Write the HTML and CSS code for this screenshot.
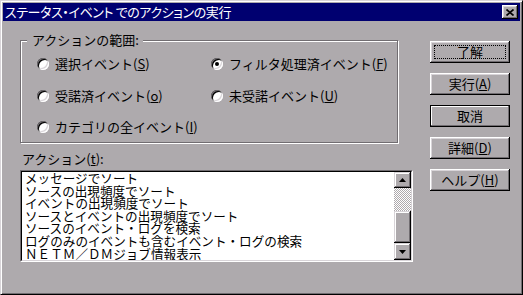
FILE: index.html
```html
<!DOCTYPE html>
<html lang="ja">
<head>
  <meta charset="utf-8">
  <title>ステータス・イベント でのアクションの実行</title>
  <link rel="stylesheet" href="styles.css">
</head>
<body>
  <div class="window">
    <div class="titlebar">
      <span class="title">ステータス・イベント でのアクションの実行</span>
      <button class="close-btn" type="button">
        <svg width="8" height="7" viewBox="0 0 8 7"><path d="M0.5 0.5 L7.5 6.5 M7.5 0.5 L0.5 6.5" stroke="#000" stroke-width="1.7" fill="none"/></svg>
      </button>
    </div>

    <div class="dialog-body">
      <div class="main-col">
        <fieldset class="scope">
          <legend>アクションの範囲:</legend>
          <div class="radio-grid">
            <label class="radio-item"><span class="radio"></span><span>選択イベント(<u>S</u>)</span></label>
            <label class="radio-item"><span class="radio checked"></span><span>フィルタ処理済イベント(<u>F</u>)</span></label>
            <label class="radio-item"><span class="radio"></span><span>受諾済イベント(<u>o</u>)</span></label>
            <label class="radio-item"><span class="radio"></span><span>未受諾イベント(<u>U</u>)</span></label>
            <label class="radio-item"><span class="radio"></span><span>カテゴリの全イベント(<u>I</u>)</span></label>
          </div>
        </fieldset>

        <div class="list-label">アクション(<u>t</u>):</div>
        <div class="listbox">
          <div class="listbox-inner">
            <ul class="list-items">
              <li>メッセージでソート</li>
              <li>ソースの出現頻度でソート</li>
              <li>イベントの出現頻度でソート</li>
              <li>ソースとイベントの出現頻度でソート</li>
              <li>ソースのイベント・ログを検索</li>
              <li>ログのみのイベントも含むイベント・ログの検索</li>
              <li>ＮＥＴＭ／ＤＭジョブ情報表示</li>
            </ul>
            <div class="scrollbar">
              <div class="sb-btn sb-up">
                <svg width="7" height="4" viewBox="0 0 7 4"><polygon points="3.5,0 7,4 0,4" fill="#000"/></svg>
              </div>
              <div class="sb-track"></div>
              <div class="sb-thumb"></div>
              <div class="sb-btn sb-down">
                <svg width="7" height="4" viewBox="0 0 7 4"><polygon points="0,0 7,0 3.5,4" fill="#000"/></svg>
              </div>
            </div>
          </div>
        </div>
      </div>

      <div class="buttons">
        <button class="btn focused" type="button">了解</button>
        <button class="btn" type="button">実行(<u>A</u>)</button>
        <button class="btn default" type="button">取消</button>
        <button class="btn" type="button">詳細(<u>D</u>)</button>
        <button class="btn" type="button">ヘルプ(<u>H</u>)</button>
      </div>
    </div>
  </div>
</body>
</html>
```

FILE: styles.css
```css
body {
  margin: 0;
  font-family: "Noto Sans CJK JP", "Noto Sans", sans-serif;
  font-size: 13px;
  color: #000;
  background-color: #aeaaad;
}

/* окно */
.window {
  width: 523px;
  height: 295px;
  box-sizing: border-box;
  padding: 2px;
  background-color: #aeaaad;
  border: 1px solid;
  border-color: #d8d4d8 #000 #000 #d8d4d8;
  box-shadow: inset 1px 1px 0 #fff, inset -1px -1px 0 #716d71;
}

.titlebar {
  height: 18px;
  display: flex;
  align-items: center;
  justify-content: space-between;
  padding: 0 2px;
  background-color: #000070;
}

.title {
  color: #fff;
  font-size: 13px;
  line-height: 18px;
  font-feature-settings: "palt";
  letter-spacing: -0.4px;
}

.close-btn {
  width: 16px;
  height: 14px;
  padding: 0;
  border: none;
  display: flex;
  align-items: center;
  justify-content: center;
  background-color: #aeaaad;
  box-shadow: inset -1px -1px 0 #000, inset 1px 1px 0 #fff, inset -2px -2px 0 #716d71, inset 2px 2px 0 #d8d4d8;
}

.dialog-body {
  display: flex;
}

.main-col {
  width: 393px;
  margin-left: 17px;
}

/* группа переключателей */
.scope {
  width: 378px;
  box-sizing: border-box;
  margin: 11px 0 0 0;
  padding: 0;
  border: 1px solid #716d71;
  box-shadow: inset 1px 1px 0 #fff, 1px 1px 0 #fff;
}

.scope legend {
  margin-left: 6px;
  padding: 0 4px 0 5px;
  line-height: 16px;
  background-color: #aeaaad;
}

.radio-grid {
  display: grid;
  grid-template-columns: 174px 1fr;
  grid-template-rows: 32px 32px 30px;
  align-items: center;
  padding-left: 16px;
}

.radio-item {
  display: flex;
  align-items: center;
  gap: 6px;
  line-height: 16px;
  white-space: nowrap;
}

.radio {
  position: relative;
  flex: none;
  width: 12px;
  height: 12px;
  border-radius: 50%;
  background-color: #fff;
  box-shadow: inset 1px 1px 0 #716d71, inset -1px -1px 0 #fff, inset 2px 2px 0 #000, inset -2px -2px 0 #d8d4d8;
}

.radio.checked::after {
  content: "";
  position: absolute;
  left: 4px;
  top: 4px;
  width: 4px;
  height: 4px;
  border-radius: 50%;
  background-color: #000;
}

/* список действий */
.list-label {
  margin: 8px 0 3px 2px;
  line-height: 16px;
}

.listbox {
  height: 92px;
  box-sizing: border-box;
  border: 1px solid;
  border-color: #716d71 #fff #fff #716d71;
}

.listbox-inner {
  height: 100%;
  box-sizing: border-box;
  display: flex;
  border: 1px solid;
  border-color: #000 #d8d4d8 #d8d4d8 #000;
  background-color: #fff;
}

.list-items {
  flex: 1;
  margin: 0;
  padding: 0 0 0 3px;
  list-style: none;
  overflow: hidden;
  font-size: 12.6px;
  line-height: 12.6px;
  white-space: nowrap;
}

.scrollbar {
  width: 17px;
  display: flex;
  flex-direction: column;
}

.sb-btn,
.sb-thumb {
  display: flex;
  align-items: center;
  justify-content: center;
  background-color: #aeaaad;
  box-shadow: inset -1px -1px 0 #000, inset 1px 1px 0 #d8d4d8, inset -2px -2px 0 #716d71, inset 2px 2px 0 #fff;
}

.sb-up {
  height: 16px;
}

.sb-down {
  height: 17px;
}

.sb-track {
  height: 23px;
  background: repeating-conic-gradient(#fff 0 25%, #aeaaad 0 50%) 0 0 / 2px 2px;
}

.sb-thumb {
  height: 32px;
}

/* кнопки справа */
.buttons {
  display: flex;
  flex-direction: column;
  gap: 10px;
  margin: 20px 0 0 17px;
}

.btn {
  width: 80px;
  height: 22px;
  padding: 0;
  border: none;
  font-family: inherit;
  font-size: 13px;
  line-height: 20px;
  color: #000;
  background-color: #aeaaad;
  box-shadow: inset -1px -1px 0 #000, inset 1px 1px 0 #fff, inset -2px -2px 0 #716d71, inset 2px 2px 0 #d8d4d8;
}

.btn.focused {
  outline: 1px dotted #000;
  outline-offset: -5px;
}

.btn.default {
  border: 1px solid #000;
  box-shadow: inset -1px -1px 0 #716d71, inset 1px 1px 0 #fff;
}
```
